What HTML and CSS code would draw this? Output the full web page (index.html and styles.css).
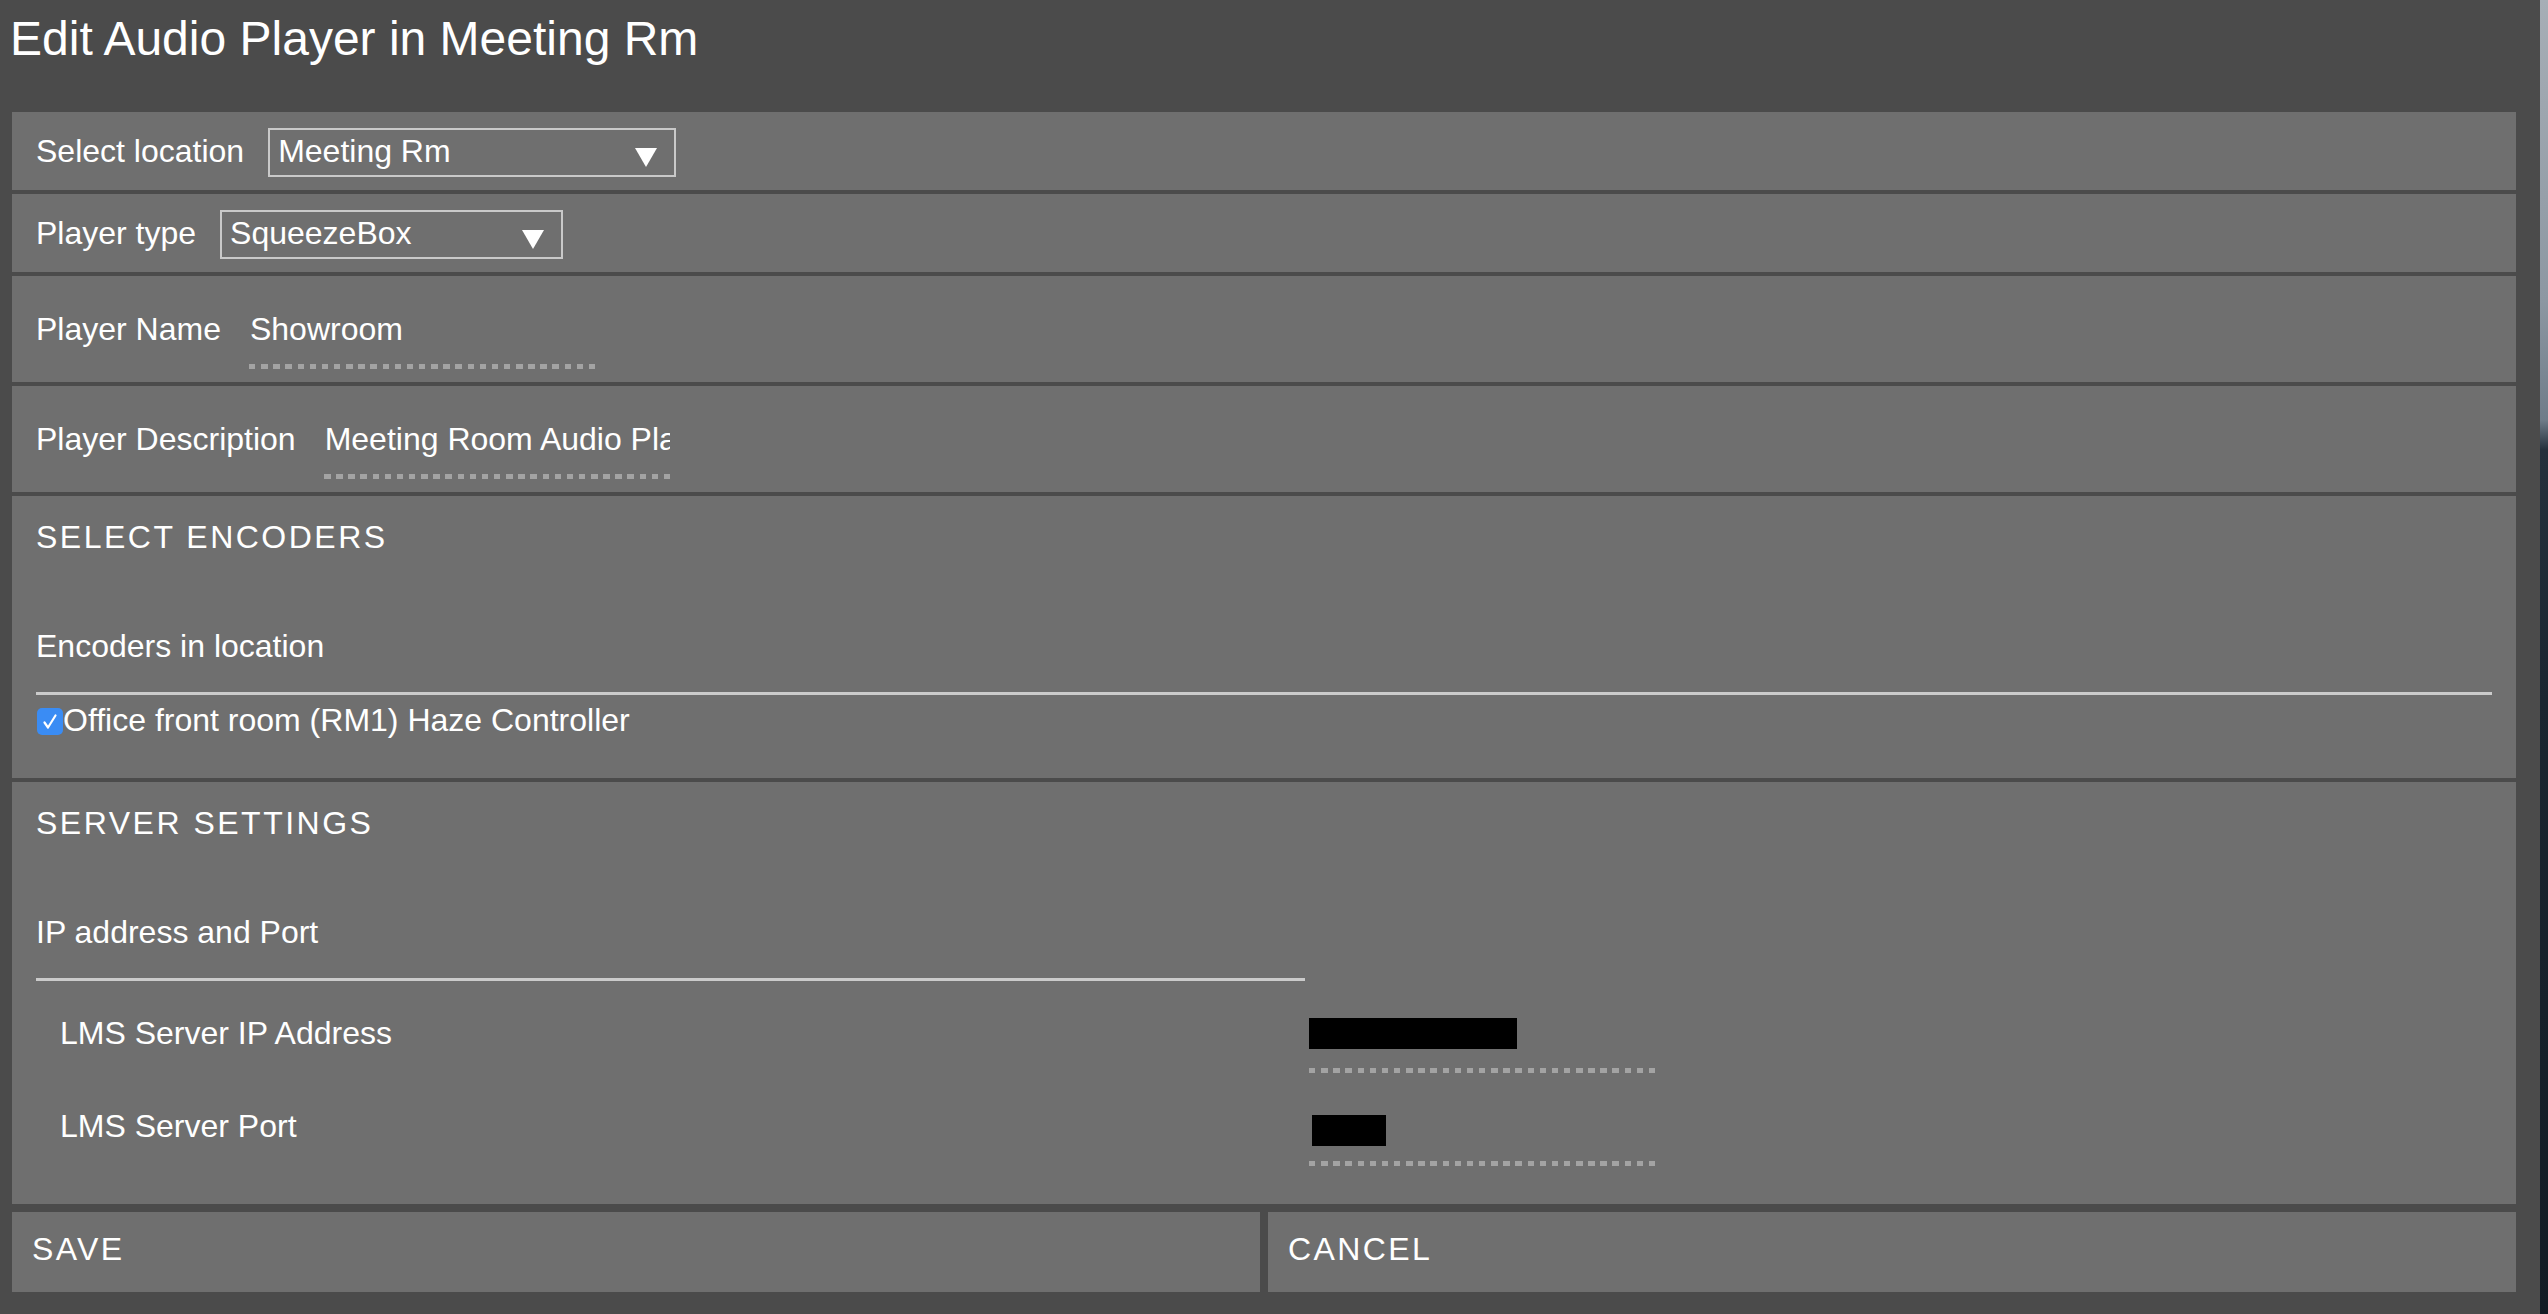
FILE: index.html
```html
<!DOCTYPE html>
<html lang="en">
<head>
<meta charset="utf-8">
<title>Edit Audio Player in Meeting Rm</title>
<link rel="stylesheet" href="styles.css">
</head>
<body>
<div class="app">
  <main class="window">
    <h1 class="title">Edit Audio Player in Meeting Rm</h1>
    <div class="form">
      <section class="row row-select">
        <span class="label label-select">Select location</span>
        <div class="select select-location">
          <span class="select-value">Meeting Rm</span>
          <svg class="caret" width="22" height="19" viewBox="0 0 22 19"><polygon points="0,0 22,0 11,19" fill="#fff"/></svg>
        </div>
      </section>
      <section class="row row-select">
        <span class="label label-select">Player type</span>
        <div class="select select-type">
          <span class="select-value">SqueezeBox</span>
          <svg class="caret" width="22" height="19" viewBox="0 0 22 19"><polygon points="0,0 22,0 11,19" fill="#fff"/></svg>
        </div>
      </section>
      <section class="row row-input">
        <span class="label">Player Name</span>
        <div class="input">Showroom</div>
      </section>
      <section class="row row-input">
        <span class="label">Player Description</span>
        <div class="input">Meeting Room Audio Player</div>
      </section>
      <section class="row section">
        <div class="section-title">SELECT ENCODERS</div>
        <div class="sublabel">Encoders in location</div>
        <div class="rule"></div>
        <label class="check-row">
          <span class="checkbox"><svg width="26" height="27" viewBox="0 0 26 27"><polyline points="7.5,14.5 11,19.5 18.5,7.5" fill="none" stroke="#fff" stroke-width="2.2" stroke-linecap="round" stroke-linejoin="round"/></svg></span>
          <span class="check-text">Office front room (RM1) Haze Controller</span>
        </label>
      </section>
      <section class="row section">
        <div class="section-title">SERVER SETTINGS</div>
        <div class="sublabel">IP address and Port</div>
        <div class="rule rule-short"></div>
        <div class="field-row">
          <span class="field-label">LMS Server IP Address</span>
          <div class="input input-redacted"><span class="redact redact-ip"></span></div>
        </div>
        <div class="field-row field-row-next">
          <span class="field-label">LMS Server Port</span>
          <div class="input input-redacted"><span class="redact redact-port"></span></div>
        </div>
      </section>
    </div>
    <div class="actions">
      <div class="btn">SAVE</div>
      <div class="btn">CANCEL</div>
    </div>
  </main>
  <div class="wallpaper"></div>
</div>
</body>
</html>
```
FILE: styles.css
```css
* { box-sizing: border-box; }

body {
  margin: 0;
  background: #4b4b4b;
  font-family: "Liberation Sans", Arial, Helvetica, sans-serif;
  color: #ffffff;
}

.app {
  display: flex;
  width: 2548px;
  height: 1314px;
  overflow: hidden;
}

.window {
  width: 2540px;
  flex: 0 0 2540px;
  background: #4b4b4b;
  display: flex;
  flex-direction: column;
}

.wallpaper {
  flex: 0 0 8px;
  background: linear-gradient(180deg, #a7aeb6 0px, #8d97a2 300px, #6f7c89 420px, #24303c 450px, #1a2530 700px, #121b24 1314px);
}

.title {
  margin: 0;
  font-weight: normal;
  font-size: 48px;
  line-height: 56px;
  padding: 11px 0 45px 10px;
}

.form {
  display: flex;
  flex-direction: column;
  gap: 4px;
  margin: 0 24px 0 12px;
}

.row {
  background: #6f6f6f;
  padding-left: 24px;
  padding-right: 24px;
  font-size: 32px;
  line-height: 40px;
}

.label {
  white-space: nowrap;
}

.row-select {
  display: flex;
  align-items: flex-start;
  gap: 24px;
  padding-top: 16px;
  padding-bottom: 13px;
}

.label-select {
  padding-top: 3px;
}

.select {
  display: flex;
  align-items: flex-start;
  height: 49px;
  border: 2px solid #c9c9c9;
  padding: 1px 17px 4px 8px;
}

.select-location { width: 408px; }
.select-type { width: 343px; }

.select-value {
  flex: 1;
  white-space: nowrap;
}

.caret {
  display: block;
  margin-top: 17px;
}

.row-input {
  display: flex;
  align-items: flex-start;
  gap: 28px;
  padding-top: 33px;
  padding-bottom: 13px;
}

.input {
  width: 346px;
  height: 60px;
  padding: 0 0 20px 1px;
  white-space: nowrap;
  overflow: hidden;
  background: repeating-linear-gradient(90deg, #a3a3a3 0 6.5px, transparent 6.5px 12.14px) left bottom / 100% 5px no-repeat;
}

.section {
  padding-top: 21px;
  padding-bottom: 38px;
}

.section-title {
  letter-spacing: 2.5px;
}

.sublabel {
  margin-top: 69px;
}

.rule {
  height: 3px;
  margin-top: 26px;
  background: #cbcbcb;
}

.rule-short {
  width: 1269px;
}

.check-row {
  display: flex;
  align-items: center;
  height: 40px;
  margin-top: 5px;
}

.checkbox {
  display: flex;
  width: 26px;
  height: 27px;
  margin-left: 1px;
  margin-top: 3px;
  border-radius: 5px;
  background: #3a8cf4;
}

.checkbox svg {
  display: block;
}

.check-text {
  white-space: nowrap;
}

.field-row {
  display: flex;
  align-items: flex-start;
  margin-top: 32px;
}

.field-row-next {
  margin-top: 33px;
}

.field-label {
  flex: 0 0 1273px;
  padding-left: 24px;
  white-space: nowrap;
}

.input-redacted {
  padding-left: 0;
}

.redact {
  display: block;
  height: 31px;
  background: #000000;
  margin-top: 5px;
}

.redact-ip {
  width: 210px;
  margin-left: -2px;
}

.redact-port {
  width: 74px;
  margin-left: 3px;
  margin-top: 9px;
}

.actions {
  display: flex;
  gap: 8px;
  margin: 8px 24px 0 12px;
}

.btn {
  flex: 1;
  height: 80px;
  background: #6f6f6f;
  padding: 17px 20px 23px;
  font-size: 32px;
  line-height: 40px;
  letter-spacing: 2.4px;
}
```
